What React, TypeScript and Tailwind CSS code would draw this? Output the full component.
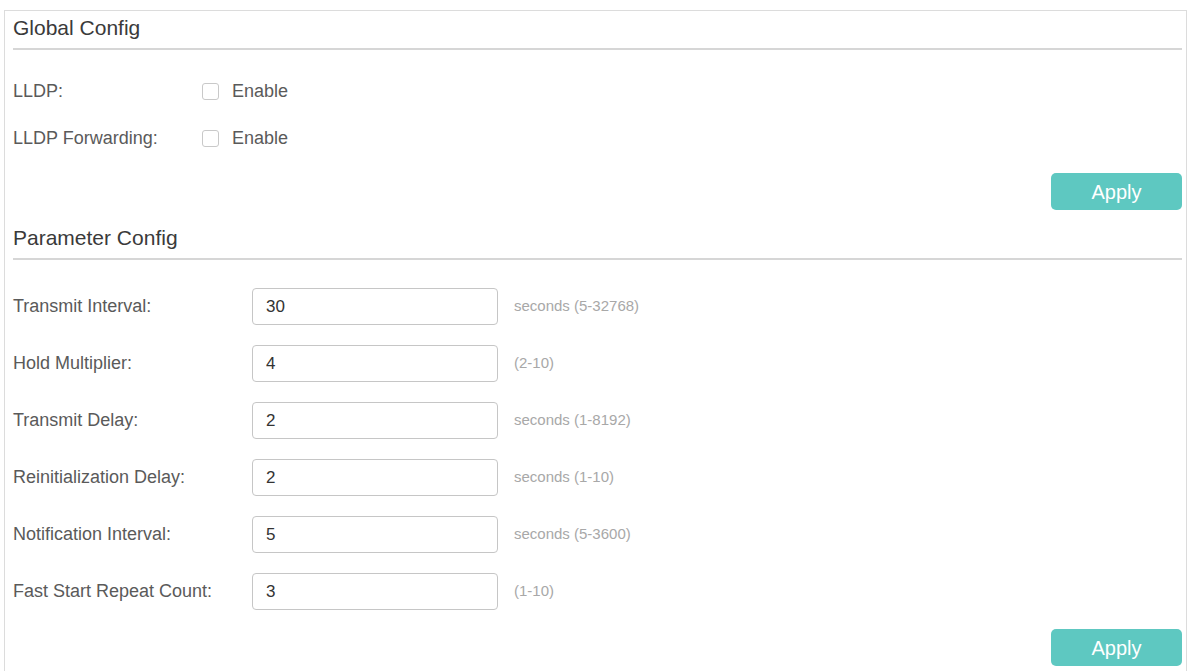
import { useState } from "react";

const params = [
  { label: "Transmit Interval:", value: "30", hint: "seconds (5-32768)" },
  { label: "Hold Multiplier:", value: "4", hint: "(2-10)" },
  { label: "Transmit Delay:", value: "2", hint: "seconds (1-8192)" },
  { label: "Reinitialization Delay:", value: "2", hint: "seconds (1-10)" },
  { label: "Notification Interval:", value: "5", hint: "seconds (5-3600)" },
  { label: "Fast Start Repeat Count:", value: "3", hint: "(1-10)" },
];

function SectionTitle({ children }: { children: string }) {
  return (
    <div className="h-[39px] border-b-2 border-[#d6d6d6] flex items-center">
      <span className="text-[21px] text-[#3a3a3a] leading-none -mt-[4px]">{children}</span>
    </div>
  );
}

function ApplyButton() {
  return (
    <div className="flex justify-end">
      <button className="w-[131px] h-[37px] rounded-[5px] bg-[#5ec8c1] text-white text-[20px] leading-none">
        Apply
      </button>
    </div>
  );
}

function EnableRow({ label }: { label: string }) {
  const [checked, setChecked] = useState(false);
  return (
    <div className="h-[47px] flex items-center">
      <span className="w-[189px] text-[18px] text-[#5a5a5a]">{label}</span>
      <label className="flex items-center gap-[13px] cursor-pointer">
        <input
          type="checkbox"
          checked={checked}
          onChange={() => setChecked(!checked)}
          className="appearance-none w-[17px] h-[17px] rounded-[3px] border border-[#c9c9c9] bg-white checked:bg-[#5ec8c1]"
        />
        <span className="text-[18px] text-[#5a5a5a]">Enable</span>
      </label>
    </div>
  );
}

export default function App() {
  const [values, setValues] = useState(params.map((p) => p.value));

  return (
    <div className="min-h-screen bg-white pt-[10px] pl-[4px] pr-[3px] font-['Liberation_Sans',Arial,sans-serif]">
      <div className="border border-[#dcdcdc] pl-[8px] pr-[4px] pb-[20px]">
        <SectionTitle>Global Config</SectionTitle>
        <div className="pt-[18px]">
          <EnableRow label="LLDP:" />
          <EnableRow label="LLDP Forwarding:" />
        </div>
        <div className="pt-[11px]">
          <ApplyButton />
        </div>

        <div className="pt-[11px]">
          <SectionTitle>Parameter Config</SectionTitle>
        </div>
        <div className="pt-[18px] flex flex-col">
          {params.map((p, i) => (
            <div key={p.label} className="h-[57px] flex items-center">
              <span className="w-[239px] text-[18px] text-[#5a5a5a]">{p.label}</span>
              <input
                value={values[i]}
                onChange={(e) => {
                  const next = [...values];
                  next[i] = e.target.value;
                  setValues(next);
                }}
                className="w-[246px] h-[37px] rounded-[4px] border border-[#c6c6c6] px-[13px] text-[17px] text-[#333] outline-none"
              />
              <span className="ml-[16px] text-[15px] text-[#a8a8a8]">{p.hint}</span>
            </div>
          ))}
        </div>
        <div className="pt-[9px]">
          <ApplyButton />
        </div>
      </div>
    </div>
  );
}
